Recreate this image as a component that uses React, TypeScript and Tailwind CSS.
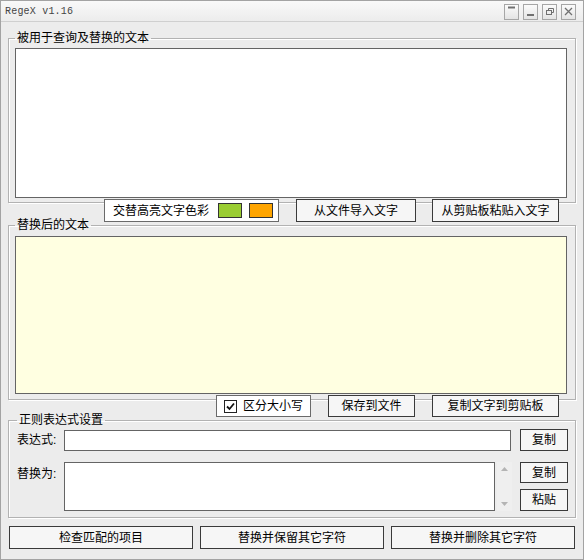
const btn =
  "flex items-center justify-center bg-[#f6f6f6] border border-[#3a3a3a] text-[12px] leading-none text-black";
const field =
  "border border-[#b2b2b2] shadow-[inset_1px_1px_0_#ffffff,1px_1px_0_#ffffff] min-w-0";

function TitleButton({ kind }: { kind: string }) {
  return (
    <div className="w-[15px] h-[16px] border border-[#a6a6a6] bg-gradient-to-b from-[#fbfbfb] to-[#e4e4e4] flex items-center justify-center">
      <svg width="11" height="11" viewBox="0 0 11 11" fill="none" stroke="#707070" strokeWidth="1">
        {kind === "top" && <path d="M2 1.5h7" strokeWidth="2" />}
        {kind === "min" && <path d="M2 9h7" strokeWidth="2" />}
        {kind === "max" && (
          <>
            <rect x="2.5" y="4.5" width="5" height="4" />
            <path d="M4.5 4.5V2.5h5v4h-2" />
          </>
        )}
        {kind === "close" && <path d="M2 2l7 7M9 2l-7 7" strokeWidth="1.3" />}
      </svg>
    </div>
  );
}

export default function App() {
  return (
    <div className="w-[584px] h-[560px] bg-[#ececec] border border-[#a3a3a3] flex flex-col font-['Liberation_Sans','Noto_Sans_CJK_SC',sans-serif] text-[12px] text-black overflow-hidden">
      {/* title bar */}
      <div className="h-[21px] shrink-0 flex items-center justify-between pl-[4px] pr-[7px] bg-gradient-to-b from-[#f9f9f9] to-[#ececec] border-b border-[#cfcfcf]">
        <span className="font-['Liberation_Mono',monospace] text-[10px] text-[#444] tracking-[0.2px]">RegeX v1.16</span>
        <div className="flex gap-[4px] mt-[1px]">
          <TitleButton kind="top" />
          <TitleButton kind="min" />
          <TitleButton kind="max" />
          <TitleButton kind="close" />
        </div>
      </div>

      <div className="flex flex-col pl-[7px] pr-[7px]">
        {/* source text */}
        <fieldset className={`${field} mt-[9px] pl-[6px] pr-[8px] pt-[3px] pb-[4px]`}>
          <legend className="px-[2px] text-[12px] leading-[14px]">被用于查询及替换的文本</legend>
          <div className="h-[150px] bg-white border border-[#646464]" />
        </fieldset>

        <div className="flex h-[23px] -mt-[4px]">
          <div className="ml-[96px] w-[175px] bg-white border border-[#6a6a6a] flex items-center pl-[8px]">
            <span>交替高亮文字色彩</span>
            <span className="ml-[9px] w-[24px] h-[15px] bg-[#9acd32] border border-[#333]" />
            <span className="ml-[7px] w-[24px] h-[15px] bg-[#ffa500] border border-[#333]" />
          </div>
          <div className={`${btn} ml-[17px] w-[120px]`}>从文件导入文字</div>
          <div className={`${btn} ml-[16px] w-[127px]`}>从剪贴板粘贴入文字</div>
        </div>

        {/* result text */}
        <fieldset className={`${field} -mt-[4px] pl-[6px] pr-[8px] pt-[4px] pb-[5px]`}>
          <legend className="px-[2px] text-[12px] leading-[14px]">替换后的文本</legend>
          <div className="h-[158px] bg-[#ffffe1] border border-[#646464]" />
        </fieldset>

        <div className="flex h-[22px] -mt-[5px]">
          <div className="ml-[208px] w-[95px] bg-white border border-[#6a6a6a] flex items-center pl-[7px]">
            <svg width="13" height="13" viewBox="0 0 13 13" className="shrink-0">
              <rect x="0.5" y="0.5" width="12" height="12" fill="#fff" stroke="#222" />
              <path d="M3 6.5l2.5 2.5L10 3.5" fill="none" stroke="#111" strokeWidth="1.8" />
            </svg>
            <span className="ml-[6px]">区分大小写</span>
          </div>
          <div className={`${btn} ml-[17px] w-[87px]`}>保存到文件</div>
          <div className={`${btn} ml-[17px] w-[127px]`}>复制文字到剪贴板</div>
        </div>

        {/* regex settings */}
        <fieldset className={`${field} -mt-[4px] pl-[8px] pr-[7px] pt-[2px] pb-[6px]`}>
          <legend className="px-[2px] text-[12px] leading-[14px]">正则表达式设置</legend>
          <div className="flex items-center h-[22px]">
            <span className="w-[47px]">表达式:</span>
            <div className="w-[447px] h-[21px] bg-white border border-[#646464]" />
            <div className={`${btn} ml-[9px] w-[48px] h-[22px]`}>复制</div>
          </div>
          <div className="flex mt-[11px] h-[49px]">
            <span className="w-[47px] pt-[3px]">替换为:</span>
            <div className="w-[431px] h-[49px] bg-white border border-[#646464]" />
            <div className="ml-[2px] w-[15px] h-[49px] bg-[#efefef] flex flex-col justify-between items-center py-[5px]">
              <svg width="7" height="4" viewBox="0 0 7 4"><path d="M3.5 0L7 4H0z" fill="#b4b4b4" /></svg>
              <svg width="7" height="4" viewBox="0 0 7 4"><path d="M0 0h7L3.5 4z" fill="#b4b4b4" /></svg>
            </div>
            <div className="ml-[8px] flex flex-col">
              <div className={`${btn} w-[48px] h-[21px]`}>复制</div>
              <div className={`${btn} w-[48px] h-[22px] mt-[6px]`}>粘贴</div>
            </div>
          </div>
        </fieldset>

        <div className="flex gap-[7px] pl-[1px] mt-[8px] h-[23px]">
          <div className={`${btn} w-[184px]`}>检查匹配的项目</div>
          <div className={`${btn} w-[184px]`}>替换并保留其它字符</div>
          <div className={`${btn} w-[184px]`}>替换并删除其它字符</div>
        </div>
      </div>
    </div>
  );
}
